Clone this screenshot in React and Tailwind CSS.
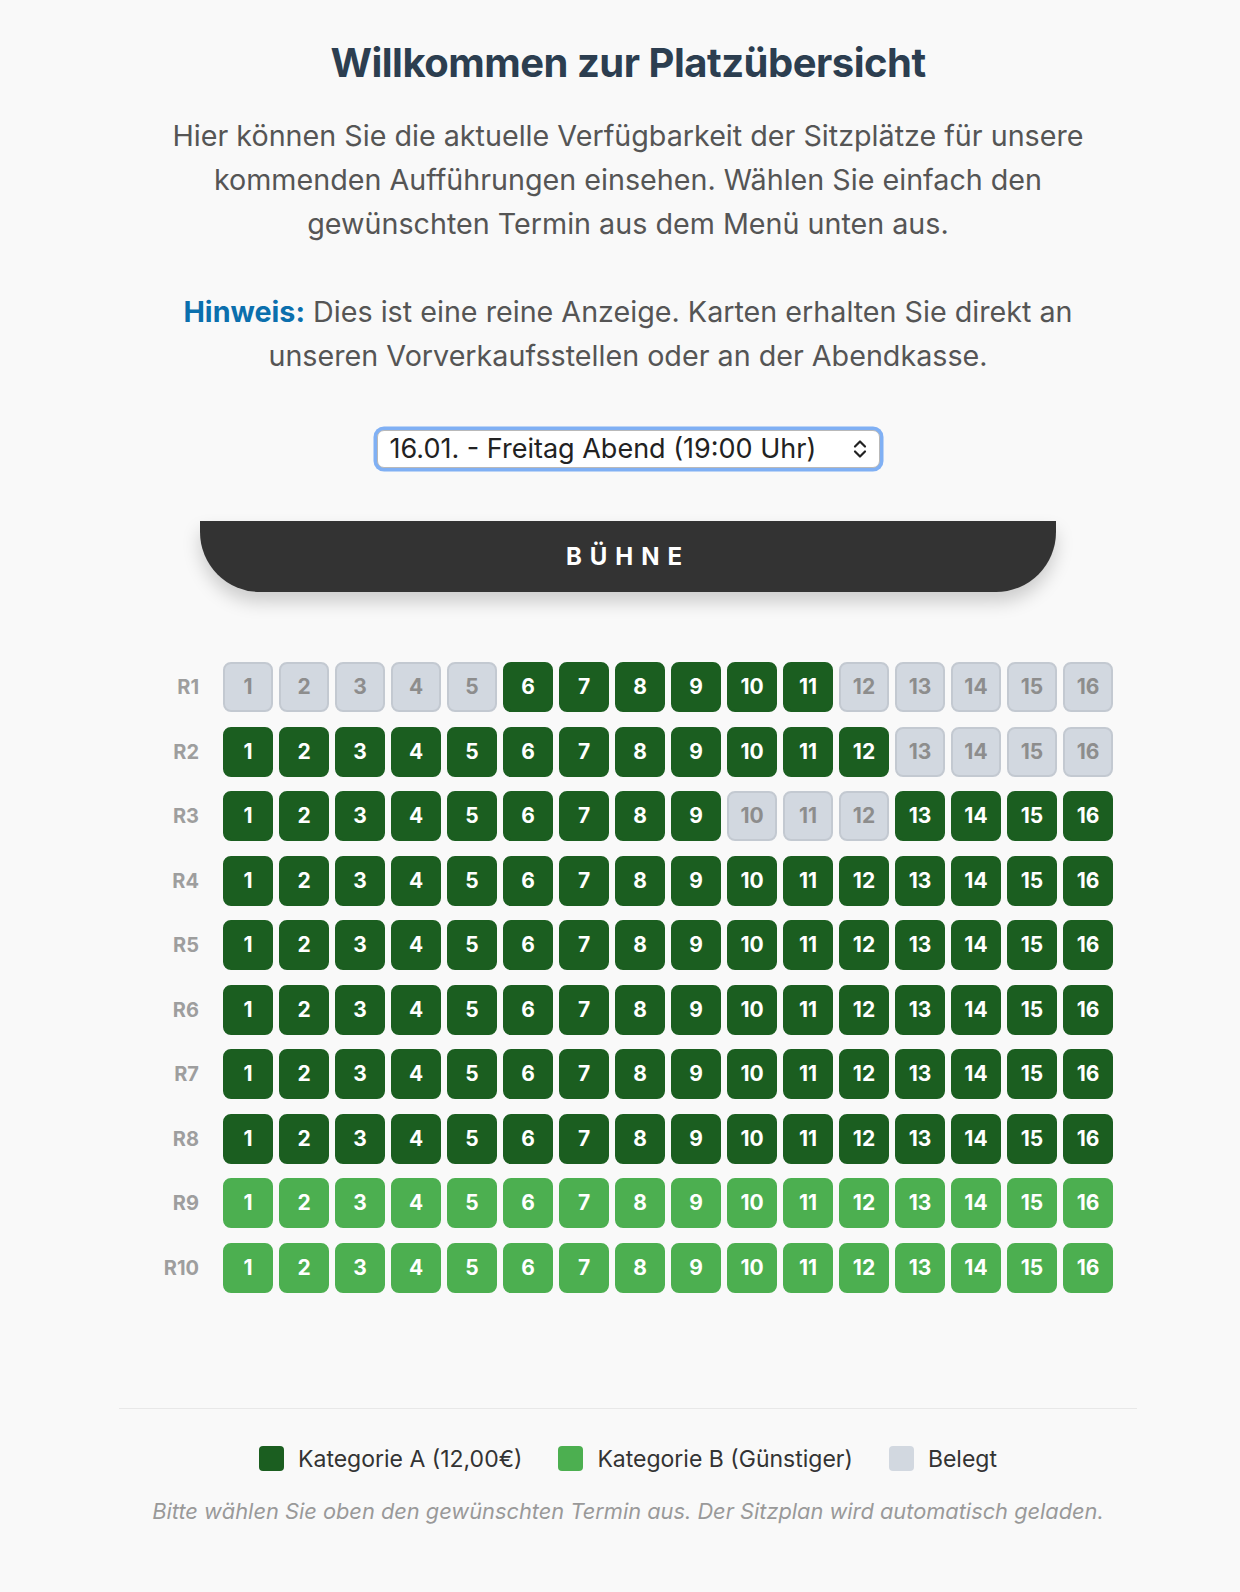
import React from 'react';

const DARK = 'dark';
const LIGHT = 'light';
const TAKEN = 'taken';

// seat state for each row, 16 seats per row
const rowState = (r, n) => {
  if (r === 1) return n <= 5 || n >= 12 ? TAKEN : DARK;
  if (r === 2) return n >= 13 ? TAKEN : DARK;
  if (r === 3) return n >= 10 && n <= 12 ? TAKEN : DARK;
  if (r >= 9) return LIGHT;
  return DARK;
};

const seatClass = {
  dark: 'bg-[#1b5e20] text-white border-2 border-[#1b5e20]',
  light: 'bg-[#4caf50] text-white border-2 border-[#4caf50]',
  taken: 'bg-[#d2d8e0] text-[#8d8d8d] border-2 border-[#c3c9d1]',
};

const rows = Array.from({ length: 10 }, (_, i) => i + 1);
const seats = Array.from({ length: 16 }, (_, i) => i + 1);

const Seat = ({ state, n }) => (
  <div
    className={`w-[50px] h-[50px] rounded-[8px] flex items-center justify-center text-[21px] font-bold ${seatClass[state]}`}
  >
    {n}
  </div>
);

const LegendItem = ({ color, label }) => (
  <div className="flex items-center gap-[14px]">
    <span className={`w-[25px] h-[25px] rounded-[4px] ${color}`} />
    <span className="text-[23px] leading-[26px] text-[#333]">{label}</span>
  </div>
);

export default function App() {
  return (
    <div className="min-h-screen bg-[#f9f9f9] pl-4 font-['Inter','Noto_Sans',sans-serif]">
      <div className="mx-auto w-[1018px] pb-[70px]">
        {/* Header */}
        <h1 className="pt-[39px] text-center text-[40px] leading-[48px] font-bold text-[#2c3e50] tracking-[-0.5px]">
          Willkommen zur Platzübersicht
        </h1>
        <p className="mt-[27px] text-center text-[28.7px] leading-[44px] text-[#555]">
          Hier können Sie die aktuelle Verfügbarkeit der Sitzplätze für unsere
          <br />
          kommenden Aufführungen einsehen. Wählen Sie einfach den
          <br />
          gewünschten Termin aus dem Menü unten aus.
        </p>
        <p className="mt-[44px] text-center text-[28.7px] leading-[44px] text-[#555]">
          <strong className="font-bold text-[#0b6fad]">Hinweis:</strong> Dies ist eine reine Anzeige. Karten erhalten Sie direkt an
          <br />
          unseren Vorverkaufsstellen oder an der Abendkasse.
        </p>

        {/* Termin select */}
        <div className="mt-[52px] flex justify-center">
          <div className="relative w-[503px] h-[38px] rounded-[7px] bg-white border border-[#b9b9b9] shadow-[0_0_0_3.5px_#80b0f4]">
            <select
              defaultValue="1"
              className="w-full h-full appearance-none bg-transparent pl-[12px] pr-10 text-[27px] leading-[36px] text-[#222] outline-none"
            >
              <option value="1">16.01. - Freitag Abend (19:00 Uhr)</option>
              <option value="2">17.01. - Samstag Abend (19:00 Uhr)</option>
              <option value="3">18.01. - Sonntag Nachmittag (15:00 Uhr)</option>
            </select>
            <svg
              className="pointer-events-none absolute right-[12px] top-1/2 -translate-y-1/2"
              width="14"
              height="20"
              viewBox="0 0 14 20"
              fill="none"
              stroke="#222"
              strokeWidth="2.2"
              strokeLinecap="round"
              strokeLinejoin="round"
            >
              <path d="M2 7.5 7 2.5l5 5" />
              <path d="M2 12.5l5 5 5-5" />
            </svg>
          </div>
        </div>

        {/* Stage */}
        <div className="mt-[53px] mx-auto w-[856px] h-[71px] bg-[#333] rounded-b-[60px] shadow-[0_10px_18px_rgba(0,0,0,0.18)] flex items-center justify-center">
          <span className="text-white text-[24px] font-bold tracking-[8px]">BÜHNE</span>
        </div>

        {/* Seat map */}
        <div className="mt-[70px] flex flex-col gap-[14.5px]">
          {rows.map((r) => (
            <div key={r} className="flex items-center justify-center">
              <div className="w-[56px] mr-[24px] text-right text-[20px] font-bold text-[#9e9e9e]">R{r}</div>
              <div className="flex gap-[6px]">
                {seats.map((n) => (
                  <Seat key={n} n={n} state={rowState(r, n)} />
                ))}
              </div>
            </div>
          ))}
        </div>

        {/* Legend */}
        <div className="mt-[115px] border-t border-[#e8e8e8]">
          <div className="mt-[37px] flex items-center justify-center gap-[36px]">
            <LegendItem color="bg-[#1b5e20]" label="Kategorie A (12,00€)" />
            <LegendItem color="bg-[#4caf50]" label="Kategorie B (Günstiger)" />
            <LegendItem color="bg-[#d2d8e0]" label="Belegt" />
          </div>
          <p className="mt-[25px] text-center text-[21.8px] leading-[28px] italic text-[#999]">
            Bitte wählen Sie oben den gewünschten Termin aus. Der Sitzplan wird automatisch geladen.
          </p>
        </div>
      </div>
    </div>
  );
}
